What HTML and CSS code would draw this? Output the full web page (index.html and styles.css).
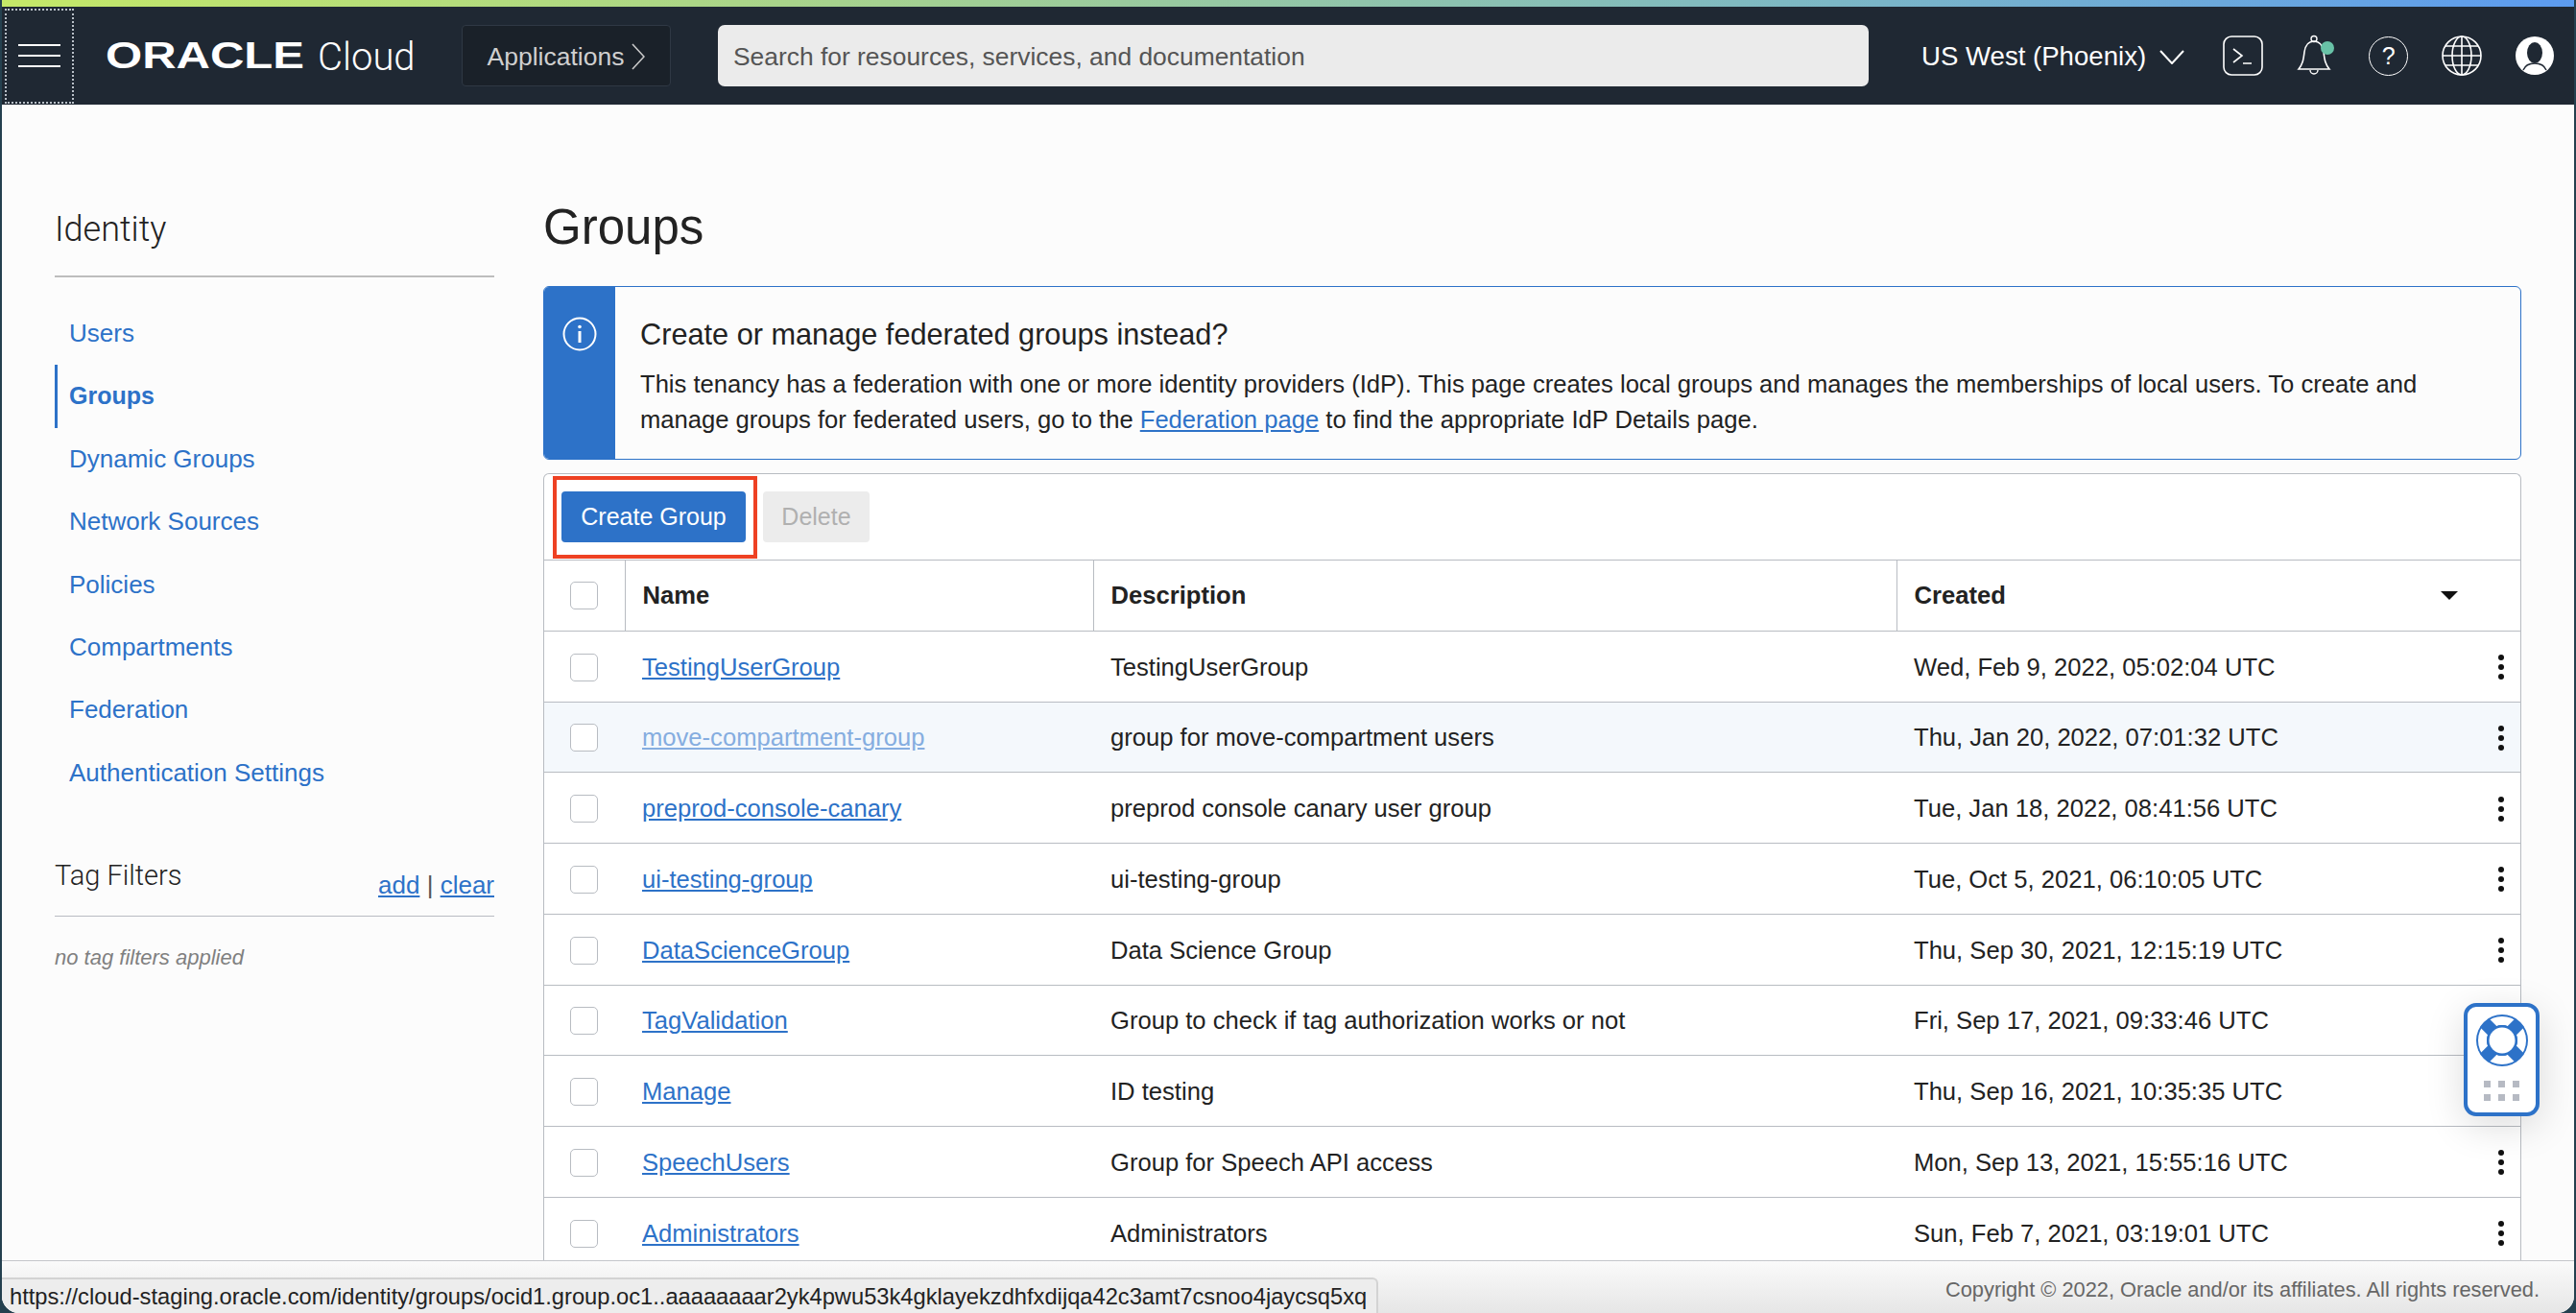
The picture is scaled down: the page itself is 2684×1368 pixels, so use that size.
FILE: index.html
```html
<!DOCTYPE html>
<html lang="en">
<head>
    <meta charset="UTF-8">
    <title>Groups - Oracle Cloud</title>
    <link rel="stylesheet" href="styles.css">
</head>
<body>
<div class="window">

    <!-- Top gradient strip -->
    <div class="strip"></div>

    <!-- Navigation Bar -->
    <header class="navbar">
        <div class="burger"><span></span><span></span><span></span></div>
        <div class="logo"><span class="logo-word">ORACLE</span></div>
        <span class="logo-cloud">Cloud</span>
        <div class="apps">
            <span>Applications</span>
            <svg width="14" height="28" viewBox="0 0 14 28"><path d="M1 1l12 13L1 27" fill="none" stroke="#c9c9c9" stroke-width="1.6"/></svg>
        </div>
        <div class="search">Search for resources, services, and documentation</div>
        <div class="region">
            <span>US West (Phoenix)</span>
            <svg width="26" height="15" viewBox="0 0 26 15"><path d="M1 1l12 13L25 1" fill="none" stroke="#fff" stroke-width="2"/></svg>
        </div>
        <svg class="icon icon-shell" width="42" height="42" viewBox="0 0 42 42">
            <rect x="1" y="1" width="40" height="40" rx="8" fill="none" stroke="#fff" stroke-width="1.6"/>
            <path d="M11 14l9 7-9 7M21 29h9" fill="none" stroke="#fff" stroke-width="1.6"/>
        </svg>
        <svg class="icon icon-bell" width="40" height="44" viewBox="0 0 40 44">
            <path d="M2 36c4-5 5-9 6-18 1-7 5-11 10-11s9 4 10 11c1 9 2 13 6 18z" fill="none" stroke="#fff" stroke-width="1.6"/>
            <circle cx="18" cy="4.5" r="3" fill="none" stroke="#fff" stroke-width="1.4"/>
            <path d="M14 37a4 4 0 0 0 8 0" fill="none" stroke="#fff" stroke-width="1.4"/>
            <circle cx="32" cy="14" r="7" fill="#68c2a7"/>
        </svg>
        <div class="icon icon-help">?</div>
        <svg class="icon icon-globe" width="42" height="42" viewBox="0 0 42 42" fill="none" stroke="#fff" stroke-width="1.6">
            <circle cx="21" cy="21" r="20"/>
            <ellipse cx="21" cy="21" rx="10" ry="20"/>
            <path d="M21 1v40M1 21h40M4 11h34M4 31h34"/>
        </svg>
        <svg class="icon icon-user" width="40" height="40" viewBox="0 0 40 40">
            <circle cx="20" cy="20" r="20" fill="#fff"/>
            <ellipse cx="20" cy="17" rx="8" ry="11" fill="#1f2833"/>
            <path d="M8 35c2-5 7-7 12-7s10 2 12 7" fill="none" stroke="#1f2833" stroke-width="1.4"/>
        </svg>
    </header>

    <!-- Page Content -->
    <div class="main">
        <aside class="sidebar">
            <h2 class="side-title">Identity</h2>
            <nav class="side-nav">
                <a href="#">Users</a>
                <a href="#" class="active">Groups</a>
                <a href="#">Dynamic Groups</a>
                <a href="#">Network Sources</a>
                <a href="#">Policies</a>
                <a href="#">Compartments</a>
                <a href="#">Federation</a>
                <a href="#">Authentication Settings</a>
            </nav>
            <div class="filters-head">
                <h3>Tag Filters</h3>
                <div class="filters-links"><a href="#">add</a> <span>|</span> <a href="#">clear</a></div>
            </div>
            <p class="filters-empty">no tag filters applied</p>
        </aside>

        <section class="content">
            <h1>Groups</h1>

            <div class="notice">
                <div class="notice-side">
                    <svg width="36" height="36" viewBox="0 0 36 36">
                        <circle cx="18" cy="18" r="16.5" fill="none" stroke="#fff" stroke-width="2"/>
                        <circle cx="18" cy="10.5" r="1.8" fill="#fff"/>
                        <rect x="16.5" y="15" width="3" height="12" fill="#fff"/>
                    </svg>
                </div>
                <div class="notice-body">
                    <h4>Create or manage federated groups instead?</h4>
                    <p class="notice-line">This tenancy has a federation with one or more identity providers (IdP). This page creates local groups and manages the memberships of local users. To create and</p>
                    <p class="notice-line">manage groups for federated users, go to the <a href="#">Federation page</a> to find the appropriate IdP Details page.</p>
                </div>
            </div>

            <div class="panel">
                <div class="toolbar">
                    <div class="callout"><button class="btn btn-primary">Create Group</button></div>
                    <button class="btn btn-disabled">Delete</button>
                </div>
                <table class="groups">
                    <colgroup>
                        <col class="col-check"><col class="col-name"><col class="col-desc"><col>
                    </colgroup>
                    <thead>
                        <tr>
                            <th><span class="check"></span></th>
                            <th>Name</th>
                            <th>Description</th>
                            <th><div class="created">Created <span class="sort"></span></div></th>
                        </tr>
                    </thead>
                    <tbody>
                        <tr>
                            <td><span class="check"></span></td>
                            <td><a href="#">TestingUserGroup</a></td>
                            <td>TestingUserGroup</td>
                            <td><div class="created">Wed, Feb 9, 2022, 05:02:04 UTC <span class="kebab"><i></i><i></i><i></i></span></div></td>
                        </tr>
                        <tr class="hover">
                            <td><span class="check"></span></td>
                            <td><a href="#">move-compartment-group</a></td>
                            <td>group for move-compartment users</td>
                            <td><div class="created">Thu, Jan 20, 2022, 07:01:32 UTC <span class="kebab"><i></i><i></i><i></i></span></div></td>
                        </tr>
                        <tr>
                            <td><span class="check"></span></td>
                            <td><a href="#">preprod-console-canary</a></td>
                            <td>preprod console canary user group</td>
                            <td><div class="created">Tue, Jan 18, 2022, 08:41:56 UTC <span class="kebab"><i></i><i></i><i></i></span></div></td>
                        </tr>
                        <tr>
                            <td><span class="check"></span></td>
                            <td><a href="#">ui-testing-group</a></td>
                            <td>ui-testing-group</td>
                            <td><div class="created">Tue, Oct 5, 2021, 06:10:05 UTC <span class="kebab"><i></i><i></i><i></i></span></div></td>
                        </tr>
                        <tr>
                            <td><span class="check"></span></td>
                            <td><a href="#">DataScienceGroup</a></td>
                            <td>Data Science Group</td>
                            <td><div class="created">Thu, Sep 30, 2021, 12:15:19 UTC <span class="kebab"><i></i><i></i><i></i></span></div></td>
                        </tr>
                        <tr>
                            <td><span class="check"></span></td>
                            <td><a href="#">TagValidation</a></td>
                            <td>Group to check if tag authorization works or not</td>
                            <td><div class="created">Fri, Sep 17, 2021, 09:33:46 UTC <span class="kebab"><i></i><i></i><i></i></span></div></td>
                        </tr>
                        <tr>
                            <td><span class="check"></span></td>
                            <td><a href="#">Manage</a></td>
                            <td>ID testing</td>
                            <td><div class="created">Thu, Sep 16, 2021, 10:35:35 UTC <span class="kebab"><i></i><i></i><i></i></span></div></td>
                        </tr>
                        <tr>
                            <td><span class="check"></span></td>
                            <td><a href="#">SpeechUsers</a></td>
                            <td>Group for Speech API access</td>
                            <td><div class="created">Mon, Sep 13, 2021, 15:55:16 UTC <span class="kebab"><i></i><i></i><i></i></span></div></td>
                        </tr>
                        <tr>
                            <td><span class="check"></span></td>
                            <td><a href="#">Administrators</a></td>
                            <td>Administrators</td>
                            <td><div class="created">Sun, Feb 7, 2021, 03:19:01 UTC <span class="kebab"><i></i><i></i><i></i></span></div></td>
                        </tr>
                    </tbody>
                </table>
            </div>
        </section>
    </div>

    <!-- Footer -->
    <footer class="footer">Copyright &copy; 2022, Oracle and/or its affiliates. All rights reserved.</footer>

    <!-- Help widget, floats over the table -->
    <div class="help-widget">
        <svg width="56" height="56" viewBox="0 0 56 56">
            <circle cx="28" cy="28" r="27" fill="#2d72c8"/>
            <circle cx="28" cy="28" r="20.5" fill="none" stroke="#fff" stroke-width="9"/>
            <path d="M9.6 9.6l36.8 36.8M46.4 9.6L9.6 46.4" stroke="#2d72c8" stroke-width="13"/>
            <circle cx="28" cy="28" r="16" fill="#2d72c8"/>
            <circle cx="28" cy="28" r="13.5" fill="#fff"/>
        </svg>
        <div class="help-dots"><i></i><i></i><i></i><i></i><i></i><i></i></div>
    </div>

    <!-- Browser link preview -->
    <div class="status-bubble">https://cloud-staging.oracle.com/identity/groups/ocid1.group.oc1..aaaaaaaar2yk4pwu53k4gklayekzdhfxdijqa42c3amt7csnoo4jaycsq5xq</div>
</div>
</body>
</html>
```

FILE: styles.css
```css
/* Base Styling */
* {
    box-sizing: border-box;
}

html, body {
    height: 100%;
}

body {
    margin: 0;
    padding: 0 2px;
    overflow: hidden;
    background-color: #24404f;
    color: #222;
    font-family: 'Liberation Sans', Arial, sans-serif;
    font-size: 26px;
}

a {
    color: #2d72c8;
    text-decoration: none;
}

.window {
    position: relative;
    display: flex;
    flex-direction: column;
    height: 1368px;
    overflow: hidden;
    background-color: #fcfcfc;
    border-bottom-left-radius: 18px;
    border-bottom-right-radius: 18px;
}

/* Top gradient strip */
.strip {
    flex: none;
    height: 7px;
    background: linear-gradient(90deg, #c4e868 0%, #a9d48a 30%, #7db8c4 70%, #5c9bf0 100%);
}

/* Navigation Bar */
.navbar {
    flex: none;
    display: flex;
    align-items: center;
    height: 102px;
    background-color: #1f2833;
    color: #fff;
}

.burger {
    display: flex;
    flex-direction: column;
    justify-content: center;
    gap: 9px;
    width: 72px;
    height: 99px;
    margin-left: 3px;
    padding: 0 12px;
    border: 2px dotted #b9c0c8;
}

.burger span {
    display: block;
    height: 2px;
    background-color: #fff;
}

.logo {
    width: 208px;
    margin-left: 33px;
    padding-top: 4px;
    line-height: 36px;
}

.logo-word {
    display: inline-block;
    font-size: 38px;
    font-weight: 700;
    transform: scaleX(1.29);
    transform-origin: left center;
}

.logo-cloud {
    width: 100px;
    margin-left: 13px;
    padding-top: 2px;
    font-family: 'Roboto', 'Liberation Sans', sans-serif;
    font-size: 40px;
    font-weight: 300;
}

.apps {
    display: flex;
    align-items: center;
    justify-content: center;
    gap: 8px;
    width: 218px;
    height: 64px;
    margin-left: 50px;
    padding-top: 2px;
    background-color: #1a2129;
    border: 1px solid #2f3844;
    border-radius: 4px;
    color: #cfcfcf;
    font-size: 26.5px;
}

.search {
    display: flex;
    align-items: center;
    width: 1199px;
    height: 64px;
    margin-left: 49px;
    padding: 2px 0 0 16px;
    background-color: #ebebeb;
    border-radius: 7px;
    color: #555;
    font-size: 26.4px;
}

.region {
    display: flex;
    align-items: center;
    gap: 14px;
    margin-left: 55px;
    padding-top: 2px;
    font-size: 27.6px;
}

.icon {
    flex: none;
}

.icon-shell {
    margin-left: 40px;
}

.icon-bell {
    margin-left: 35px;
}

.icon-help {
    display: flex;
    align-items: center;
    justify-content: center;
    width: 41px;
    height: 41px;
    margin-left: 35px;
    border: 1.6px solid #fff;
    border-radius: 50%;
    font-size: 25px;
}

.icon-globe {
    margin-left: 35px;
}

.icon-user {
    margin-left: 35px;
}

/* Sidebar and Content */
.main {
    flex: 1;
    min-height: 0;
    display: flex;
    overflow: hidden;
}

.sidebar {
    flex: none;
    width: 458px;
    margin-left: 55px;
}

.side-title {
    margin: 109px 0 0;
    padding-bottom: 27px;
    border-bottom: 2px solid #bdbdbd;
    font-family: 'Roboto', 'Liberation Sans', sans-serif;
    font-size: 36px;
    font-weight: 300;
    line-height: 42px;
}

.side-nav {
    display: flex;
    flex-direction: column;
    margin-top: 26px;
}

.side-nav a {
    display: block;
    height: 65.4px;
    padding-left: 15px;
    line-height: 65.4px;
}

.side-nav a.active {
    padding-left: 12px;
    border-left: 3px solid #2d72c8;
    font-size: 25px;
    font-weight: 700;
}

.filters-head {
    display: flex;
    align-items: flex-end;
    justify-content: space-between;
    margin-top: 58px;
    padding-bottom: 16px;
    border-bottom: 1px solid #b8bcc2;
}

.filters-head h3 {
    margin: 0 0 9px;
    font-family: 'Roboto', 'Liberation Sans', sans-serif;
    font-size: 29px;
    font-weight: 300;
    line-height: 33px;
}

.filters-links a {
    text-decoration: underline;
}

.filters-links span {
    color: #555;
}

.filters-empty {
    margin: 30px 0 0;
    color: #808080;
    font-size: 22px;
    font-style: italic;
}

.content {
    flex: none;
    width: 2061px;
    margin-left: 51px;
}

h1 {
    margin: 98px 0 0;
    font-size: 51px;
    font-weight: 400;
    line-height: 60px;
}

/* Federated groups notice */
.notice {
    display: flex;
    height: 181px;
    margin-top: 31px;
    border: 1px solid #2d72c8;
    border-radius: 6px;
    overflow: hidden;
}

.notice-side {
    flex: none;
    width: 74px;
    padding-top: 31px;
    background-color: #2d72c8;
    text-align: center;
}

.notice-body {
    padding: 32px 40px 0 26px;
}

.notice-body h4 {
    margin: 0;
    font-size: 30.7px;
    font-weight: 400;
    line-height: 36px;
}

.notice-line {
    margin: 0;
    font-size: 25.6px;
    line-height: 37px;
    white-space: nowrap;
}

.notice-body h4 + .notice-line {
    margin-top: 15px;
}

.notice-line a {
    text-decoration: underline;
}

/* Groups table */
.panel {
    margin-top: 14px;
    background-color: #fff;
    border: 1px solid #b8bcc2;
    border-bottom: 0;
    border-top-left-radius: 6px;
    border-top-right-radius: 6px;
}

.toolbar {
    display: flex;
    align-items: center;
    height: 89px;
    padding-left: 9px;
    gap: 6px;
}

.callout {
    padding: 12px 8px 13px 5px;
    border: 4px solid #ee4123;
}

.btn {
    display: block;
    height: 53px;
    border: 0;
    border-radius: 4px;
    font-family: inherit;
    font-size: 25px;
}

.btn-primary {
    width: 192px;
    background-color: #2d72c8;
    color: #fff;
}

.btn-disabled {
    width: 111px;
    background-color: #ececec;
    color: #b0b0b0;
}

.groups {
    width: 100%;
    border-collapse: collapse;
    table-layout: fixed;
    font-size: 25.6px;
}

.col-check {
    width: 84px;
}

.col-name {
    width: 488px;
}

.col-desc {
    width: 837px;
}

.groups th,
.groups td {
    height: 73.75px;
    padding: 0 0 0 18px;
    border-top: 1px solid #b8bcc2;
    text-align: left;
}

.groups td {
    padding-top: 2px;
}

.groups th {
    border-left: 1px solid #b8bcc2;
    font-weight: 700;
}

.groups th:first-child {
    padding-left: 27px;
    border-left: 0;
}

.groups td:first-child {
    padding-left: 27px;
}

.groups td a {
    text-decoration: underline;
}

.groups tr.hover td {
    background-color: #f4f8fc;
}

.groups tr.hover td a {
    color: #85ade0;
}

.check {
    display: block;
    width: 29px;
    height: 29px;
    background-color: #fff;
    border: 1px solid #b8bcc2;
    border-radius: 5px;
}

.created {
    display: flex;
    align-items: center;
    justify-content: space-between;
    padding-right: 17px;
}

.sort {
    width: 0;
    height: 0;
    margin-right: 48px;
    border-left: 9px solid transparent;
    border-right: 9px solid transparent;
    border-top: 9px solid #111;
}

.kebab {
    display: flex;
    flex-direction: column;
    gap: 4px;
}

.kebab i {
    display: block;
    width: 6px;
    height: 6px;
    background-color: #111;
    border-radius: 50%;
}

/* Footer Styling */
.footer {
    flex: none;
    height: 55px;
    padding: 17px 36px 0 0;
    background: linear-gradient(180deg, #fafafa, #e6e6e6);
    border-top: 1px solid #c4c6ca;
    color: #666;
    font-size: 21.8px;
    text-align: right;
}

/* Help widget */
.help-widget {
    position: absolute;
    top: 1045px;
    right: 36px;
    width: 79px;
    height: 118px;
    padding-top: 7px;
    background-color: #fff;
    border: 4px solid #2d72c8;
    border-radius: 13px;
    box-shadow: 0 10px 40px rgba(0, 0, 0, 0.14);
    text-align: center;
}

.help-widget svg {
    display: block;
    margin: 0 auto;
}

.help-dots {
    display: grid;
    grid-template-columns: repeat(3, 7px);
    justify-content: center;
    column-gap: 8px;
    row-gap: 7px;
    margin-top: 14px;
}

.help-dots i {
    display: block;
    height: 7px;
    background-color: #b6bac3;
}

/* Browser link preview */
.status-bubble {
    position: absolute;
    left: 0;
    bottom: 0;
    width: 1434px;
    height: 37px;
    padding: 5px 0 0 8px;
    background-color: #ededed;
    border-top: 2px solid #d3d3d3;
    border-right: 2px solid #d3d3d3;
    border-top-right-radius: 6px;
    color: #222;
    font-size: 23.7px;
    white-space: nowrap;
    overflow: hidden;
}
```
